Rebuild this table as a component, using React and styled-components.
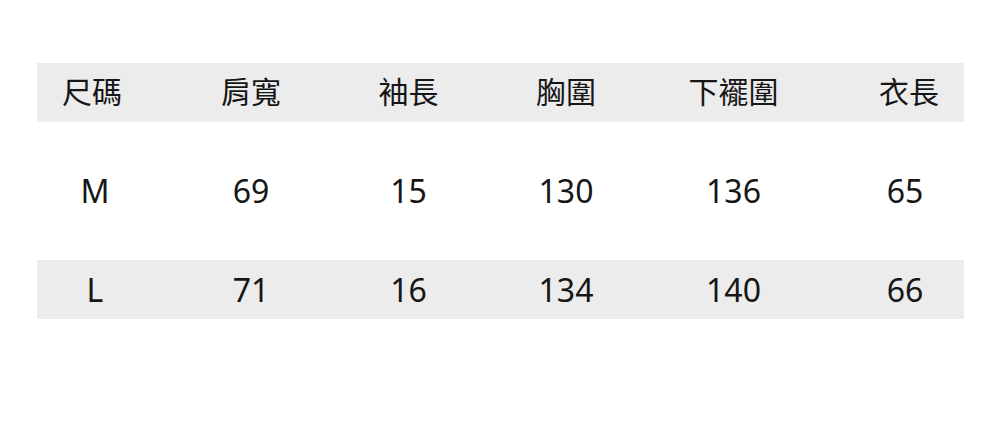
import React from "react";
import styled, { createGlobalStyle } from "styled-components";

const Global = createGlobalStyle`
  html, body { margin: 0; padding: 0; background: #ffffff; }
  body { font-family: "Noto Sans", "Noto Sans CJK TC", sans-serif; }
`;

const Page = styled.div`
  width: 1000px;
  height: 427px;
  padding: 63px 36px 0 37px;
  box-sizing: border-box;
  background: #ffffff;
`;

const Table = styled.div`
  display: flex;
  flex-direction: column;
  width: 927px;
`;

const Row = styled.div`
  display: grid;
  grid-template-columns: 135px 158px 157px 158px 177px 142px;
  align-items: center;
  height: ${(p) => p.$height}px;
  background: ${(p) => (p.$shaded ? "#ececec" : "#ffffff")};
  & > :first-child { padding-right: ${(p) => p.$firstPad}px; }
  & > :last-child { padding-left: ${(p) => p.$lastPad}px; }
`;

const Cell = styled.div`
  text-align: center;
  color: #161616;
  font-family: ${(p) =>
    p.$cjk
      ? `"Noto Sans CJK TC", "Noto Sans", sans-serif`
      : `"Noto Sans", "Noto Sans CJK TC", sans-serif`};
  font-size: ${(p) => (p.$cjk ? 30 : 32)}px;
  line-height: 1;
  transform: translateY(${(p) => (p.$cjk ? -3 : 0)}px);
  white-space: nowrap;
`;

const header = ["尺碼", "肩寬", "袖長", "胸圍", "下襬圍", "衣長"];
const rows = [
  { data: ["M", "69", "15", "130", "136", "65"], height: 138, shaded: false },
  { data: ["L", "71", "16", "134", "140", "66"], height: 59, shaded: true },
];

export default function App() {
  return (
    <>
      <Global />
      <Page>
        <Table>
          <Row $height={59} $shaded $firstPad={25} $lastPad={32}>
            {header.map((h) => (
              <Cell key={h} $cjk>
                {h}
              </Cell>
            ))}
          </Row>
          {rows.map((r) => (
            <Row
              key={r.data[0]}
              $height={r.height}
              $shaded={r.shaded}
              $firstPad={19}
              $lastPad={24}
            >
              {r.data.map((v, i) => (
                <Cell key={i}>{v}</Cell>
              ))}
            </Row>
          ))}
        </Table>
      </Page>
    </>
  );
}
